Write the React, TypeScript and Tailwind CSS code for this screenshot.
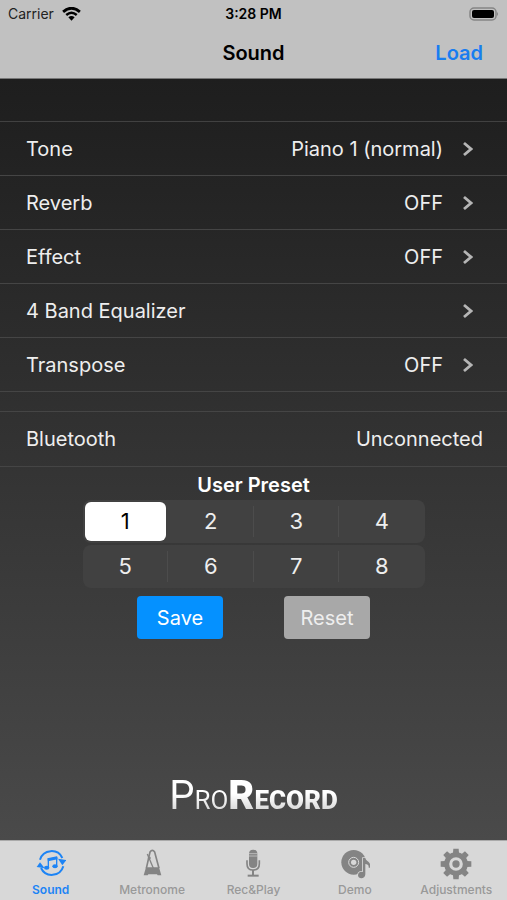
import { useState } from "react";
import type { ReactNode } from "react";

type Setting = {
  name: string;
  value: string;
};

const settings: Setting[] = [
  { name: "Tone", value: "Piano 1 (normal)" },
  { name: "Reverb", value: "OFF" },
  { name: "Effect", value: "OFF" },
  { name: "4 Band Equalizer", value: "" },
  { name: "Transpose", value: "OFF" },
];

const presetRows = [
  [1, 2, 3, 4],
  [5, 6, 7, 8],
];

const SoundIcon = () => (
  <svg viewBox="0 0 90 90" className="size-[30px]" fill="none" stroke="currentColor">
    <path d="M12 32A36 36 0 0 1 79 27" strokeWidth="6" />
    <path d="M82 52A36 36 0 0 1 15 57" strokeWidth="6" />
    <path d="M66 29L91 33L79 49Z" fill="currentColor" stroke="none" />
    <path d="M2 54L26 58L12 40Z" fill="currentColor" stroke="none" />
    <path d="M37 56V31L62 26V51" strokeWidth="4" />
    <path d="M35 32L64 26" strokeWidth="9" />
    <ellipse cx="32" cy="56" rx="8" ry="6" fill="currentColor" stroke="none" />
    <ellipse cx="57" cy="52" rx="8" ry="6" fill="currentColor" stroke="none" />
  </svg>
);

const MetronomeIcon = () => (
  <svg viewBox="0 0 90 90" className="size-[30px]" fill="none" stroke="currentColor">
    <path d="M28 58L39 9Q46 -1 53 9L66 58" strokeWidth="5" />
    <path d="M31 15L49 58" strokeWidth="4" />
    <path d="M33 29L41 26" strokeWidth="6" />
    <path d="M27 55H66L73 79H62L60 76H34L32 79H20Z" fill="currentColor" stroke="none" />
  </svg>
);

const MicIcon = () => (
  <svg viewBox="0 0 90 90" className="size-[30px]" fill="none" stroke="currentColor">
    <rect x="33" y="2" width="25" height="55" rx="12" fill="currentColor" stroke="none" />
    <path d="M33 14H58M33 21H58" stroke="#d8d8d8" strokeWidth="2" />
    <path d="M27 34V44Q27 63 45 63Q64 63 64 44V34" strokeWidth="5" />
    <path d="M45 63V79" strokeWidth="6" />
    <path d="M29 80H62" strokeWidth="6" />
  </svg>
);

const DemoIcon = () => (
  <svg viewBox="0 0 90 90" className="size-[30px]">
    <circle cx="41" cy="40" r="37" fill="currentColor" />
    <circle cx="41" cy="40" r="15" fill="none" stroke="#d8d8d8" strokeWidth="3" />
    <circle cx="41" cy="40" r="8" fill="#d8d8d8" />
    <path
      d="M69 27H76C77 36 91 38 91 50L90 56H86C87 48 82 45 76 45V76C76 91 54 91 54 79C54 70 62 67 69 69Z"
      fill="currentColor"
      stroke="#d8d8d8"
      strokeWidth="5"
      paintOrder="stroke"
    />
  </svg>
);

const GearIcon = () => (
  <svg viewBox="0 0 96 96" className="size-8">
    <circle cx="48" cy="48" r="28" fill="none" stroke="currentColor" strokeWidth="15" />
    <circle cx="48" cy="48" r="11" fill="currentColor" />
    {[0, 45, 90, 135, 180, 225, 270, 315].map((angle) => (
      <path
        key={angle}
        d="M39 15L40 2H56L57 15Z"
        fill="currentColor"
        transform={`rotate(${angle} 48 48)`}
      />
    ))}
  </svg>
);

const tabs: { name: string; icon: ReactNode }[] = [
  { name: "Sound", icon: <SoundIcon /> },
  { name: "Metronome", icon: <MetronomeIcon /> },
  { name: "Rec&Play", icon: <MicIcon /> },
  { name: "Demo", icon: <DemoIcon /> },
  { name: "Adjustments", icon: <GearIcon /> },
];

const StatusBar = () => (
  <div className="grid h-7 grid-cols-3 items-center px-2 text-sm">
    <div className="flex items-center gap-2 text-[#222222]">
      <span>Carrier</span>
      <svg viewBox="0 0 54 40" className="h-[14px] w-[19px]" fill="none" stroke="#000000">
        <path d="M3 14Q27 -7 51 14" strokeWidth="8" />
        <path d="M12 23Q27 10 42 23" strokeWidth="7" />
        <path d="M18 29Q27 22 36 29L27 39Z" fill="#000000" stroke="none" />
      </svg>
    </div>
    <div className="text-center font-semibold">3:28 PM</div>
    <svg viewBox="0 0 30 14" className="h-[14px] w-[30px] justify-self-end">
      <rect x="1" y="1" width="26" height="12" rx="4" fill="none" stroke="#858585" strokeWidth="1.5" />
      <rect x="3" y="3" width="22" height="8" rx="2" />
      <path d="M28 5Q30 7 28 9Z" fill="#858585" />
    </svg>
  </div>
);

const App = () => {
  const [preset, setPreset] = useState(1);
  const [activeTab, setActiveTab] = useState("Sound");

  return (
    <div className="flex min-h-screen flex-col bg-[#494949] font-['Inter','Liberation_Sans',sans-serif]">
      <header className="border-b border-[#777777] bg-[#c1c1c1] text-black">
        <StatusBar />
        <div className="grid h-[50px] grid-cols-3 items-center px-6 text-xl font-semibold">
          <h1 className="col-start-2 text-center">Sound</h1>
          <button className="justify-self-end text-[#187df0]">Load</button>
        </div>
      </header>

      <main className="flex flex-1 flex-col bg-linear-to-b from-[#1e1e1e] to-[#4a4a4a] text-xl text-[#eeeeee]">
        <ul className="mt-[42px] border-t border-[#414141]">
          {settings.map((setting) => (
            <li key={setting.name} className="border-b border-[#454545] last:-mb-px">
              <button className="flex h-[53px] w-full items-center pr-[34px] pl-[26px] text-left">
                <span className="flex-1">{setting.name}</span>
                <span>{setting.value}</span>
                <svg viewBox="0 0 10 16" className="ml-5 h-4 w-[10px]" fill="none">
                  <path d="M1 2L8 8L1 14" stroke="#b5b5b5" strokeWidth="2.8" />
                </svg>
              </button>
            </li>
          ))}
        </ul>

        <div className="mt-5 flex h-14 items-center justify-between border-y border-[#454545] pr-6 pl-[26px]">
          <span>Bluetooth</span>
          <span>Unconnected</span>
        </div>

        <fieldset className="mx-auto mt-1 w-[342px] max-w-full">
          <legend className="mx-auto h-[29px] font-semibold text-white">User Preset</legend>
          <div className="flex flex-col gap-[2px] text-[22px]">
            {presetRows.map((row) => (
              <div key={row[0]} className="grid h-[43px] grid-cols-4 rounded-lg bg-[#414141]">
                {row.map((n) => (
                  <label
                    key={n}
                    className="group relative m-[2px] flex items-center justify-center rounded-md has-checked:bg-white has-checked:text-black"
                  >
                    <input
                      type="radio"
                      name="preset"
                      className="sr-only"
                      checked={preset === n}
                      onChange={() => setPreset(n)}
                    />
                    {n}
                    <span className="absolute inset-y-1 -right-[2px] w-px bg-[#4c4c4c] group-last:hidden group-has-checked:hidden" />
                  </label>
                ))}
              </div>
            ))}
          </div>
        </fieldset>

        <div className="mt-2 flex justify-center gap-[61px]">
          <button className="h-[43px] w-[86px] rounded bg-[#0591ff] text-white">Save</button>
          <button className="h-[43px] w-[86px] rounded bg-[#a8a8a8] text-[#eeeeee]">Reset</button>
        </div>

        <div className="mt-auto flex justify-center pt-4 pb-5">
          <div className="flex items-baseline bg-linear-to-b from-white from-40% to-[#c4c4c4] bg-clip-text font-['Roboto',sans-serif] text-[26px] leading-10 text-transparent">
            <span className="text-[40px] leading-10">P</span>
            <span>RO</span>
            <span className="text-[40px] leading-10 font-black">R</span>
            <span className="font-black">ECORD</span>
          </div>
        </div>
      </main>

      <nav className="grid h-[60px] grid-cols-5 border-t border-[#aaaaaa] bg-[#d8d8d8]">
        {tabs.map((tab) => (
          <a
            key={tab.name}
            href="#"
            onClick={() => setActiveTab(tab.name)}
            className={
              activeTab === tab.name
                ? "flex flex-col items-center gap-[2px] text-xs font-semibold text-[#1d84f5]"
                : "flex flex-col items-center gap-[2px] text-xs font-medium text-[#999999]"
            }
          >
            <span
              className={
                activeTab === tab.name
                  ? "mt-[7px] flex h-8 items-center"
                  : "mt-[7px] flex h-8 items-center text-[#848484]"
              }
            >
              {tab.icon}
            </span>
            {tab.name}
          </a>
        ))}
      </nav>
    </div>
  );
};

export default App;
